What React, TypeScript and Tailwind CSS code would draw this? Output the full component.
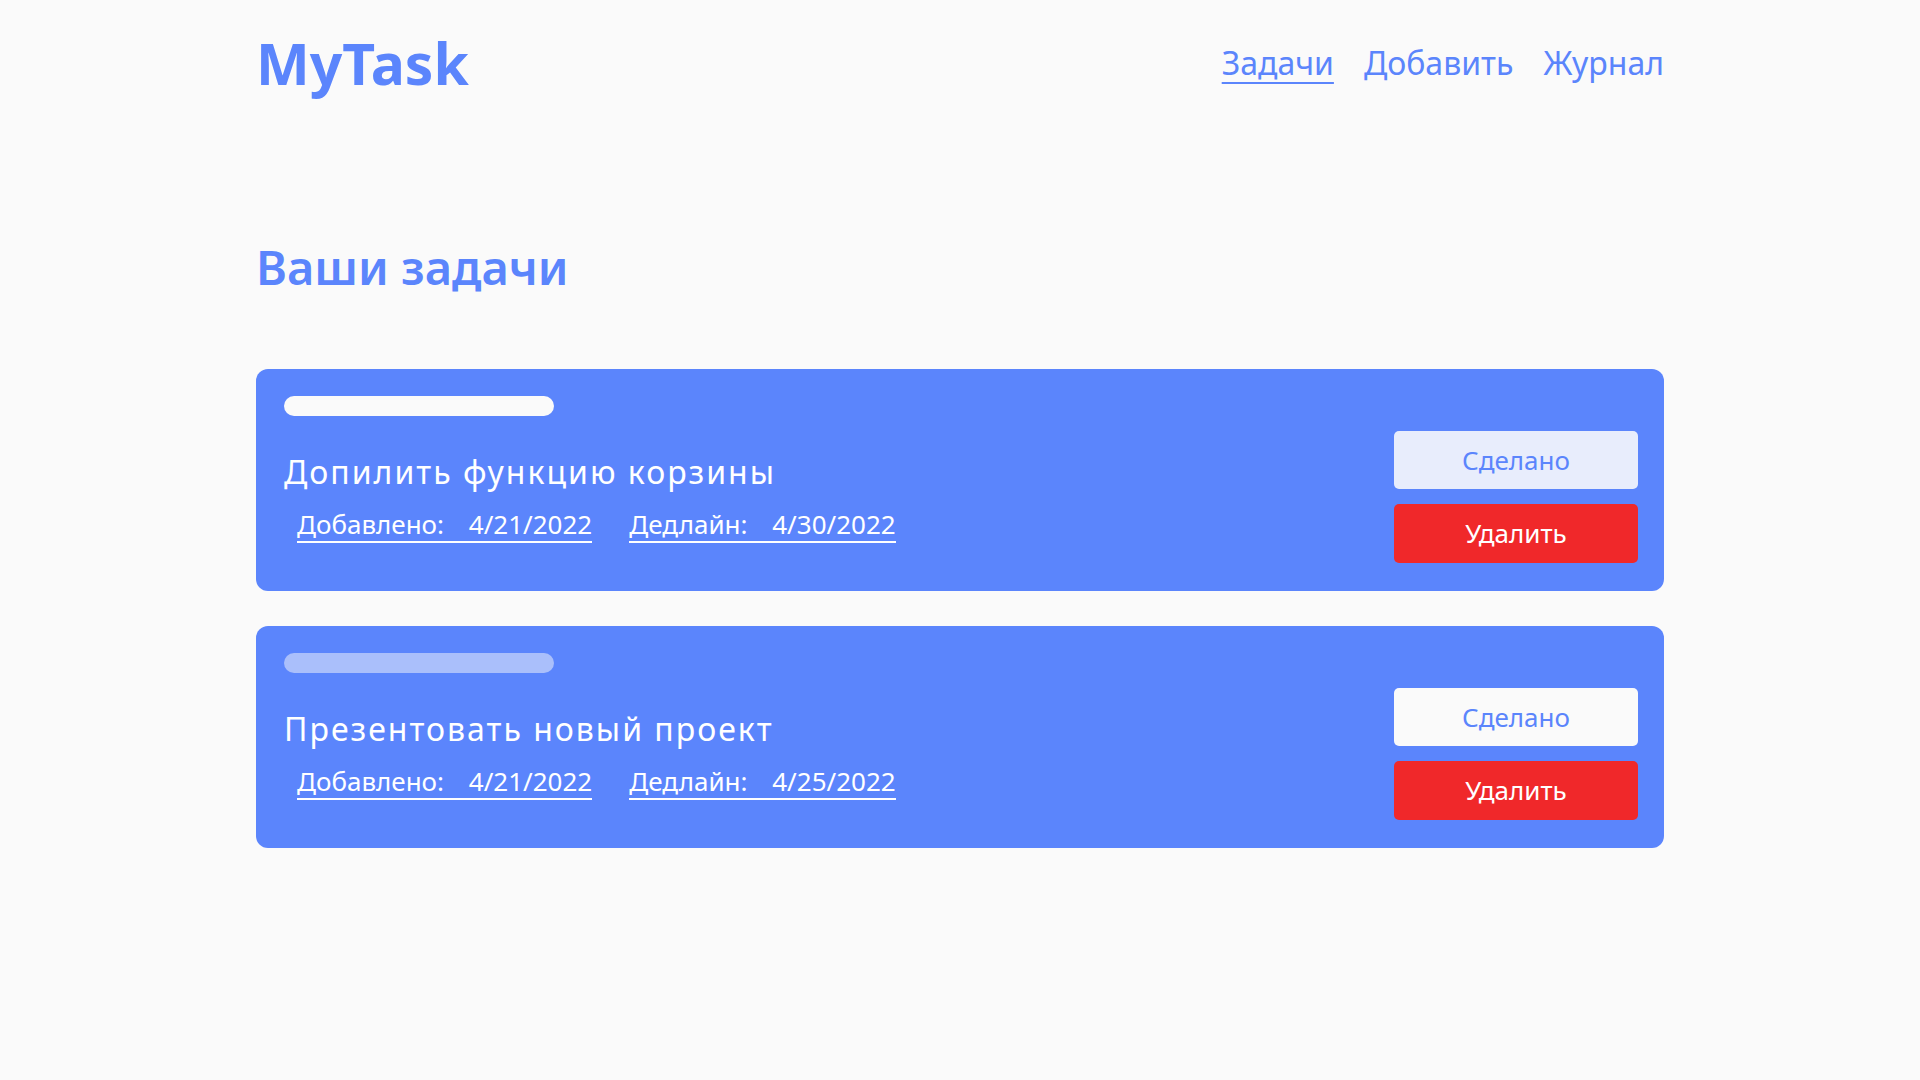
export default function App() {
  const tasks = [
    { title: "Допилить функцию корзины", added: "4/21/2022", deadline: "4/30/2022", done: "bg-[#e8edfc]", bar: "bg-[#fafafa]" },
    { title: "Презентовать новый проект", added: "4/21/2022", deadline: "4/25/2022", done: "bg-[#fafafa]", bar: "bg-[#fafafa]/50" },
  ];
  return (
    <div className="min-h-screen bg-[#fafafa] font-['Noto_Sans',sans-serif] text-[#5b85fc]">
      <div className="mx-auto w-[1408px]">
        <header className="flex h-[126px] items-center justify-between">
          <div className="text-[57px] font-bold leading-none">MyTask</div>
          <nav className="flex gap-[30px] text-[32px] leading-none">
            <a className="underline decoration-2 underline-offset-[7px]">Задачи</a>
            <a>Добавить</a>
            <a>Журнал</a>
          </nav>
        </header>
        <h1 className="mt-[118px] text-[47px] font-semibold leading-none">Ваши задачи</h1>
        <div className="mt-[78px] flex flex-col gap-[35px]">
          {tasks.map((t, i) => (
            <div key={i} className="flex h-[222px] items-end justify-between rounded-xl bg-[#5b85fc] pb-[28px] pl-[28px] pr-[26px] pt-[27px]">
              <div className="flex flex-col self-start">
                <div className={`h-5 w-[270px] rounded-full ${t.bar}`} />
                <div className="mt-[40px] text-[32px] leading-none tracking-[2px] text-white">{t.title}</div>
                <div className="mt-[23px] flex gap-[37px] pl-[13px] text-[26px] leading-none text-white">
                  <span className="border-b-2 border-white pb-[4px]">
                    Добавлено: <span className="ml-[18px]">{t.added}</span>
                  </span>
                  <span className="border-b-2 border-white pb-[4px]">
                    Дедлайн: <span className="ml-[18px]">{t.deadline}</span>
                  </span>
                </div>
              </div>
              <div className="flex w-[244px] flex-col gap-[15px]">
                <button className={`h-[58px] rounded-[5px] ${t.done} text-[26px] text-[#5b85fc]`}>Сделано</button>
                <button className="h-[59px] rounded-[5px] bg-[#f0282a] text-[26px] text-white">Удалить</button>
              </div>
            </div>
          ))}
        </div>
      </div>
    </div>
  );
}
